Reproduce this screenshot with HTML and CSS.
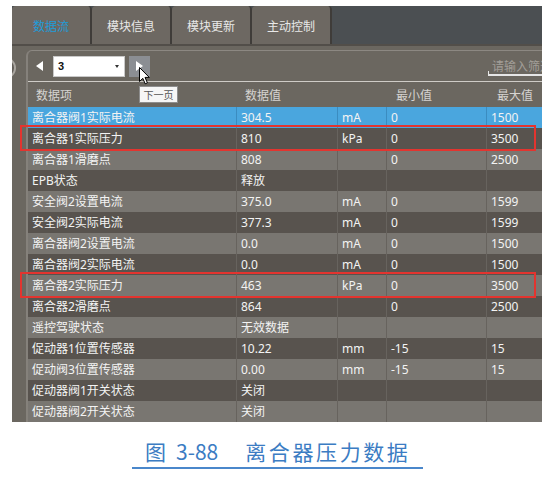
FILE: index.html
```html
<!DOCTYPE html>
<html lang="zh-CN">
<head>
<meta charset="utf-8">
<title>离合器压力数据</title>
<link rel="stylesheet" href="styles.css">
</head>
<body>
<div class="shot">
  <div class="tabs">
    <div class="tab active">数据流</div>
    <div class="tab">模块信息</div>
    <div class="tab">模块更新</div>
    <div class="tab">主动控制</div>
  </div>
  <div class="main">
    <div class="strip"><span class="knob"></span></div>
    <div class="panel">
      <div class="toolbar">
        <span class="prev"></span>
        <div class="select"><span class="sel-val">3</span><span class="caret"></span></div>
        <div class="next">
          <span class="tri"></span>
          <svg class="cursor" width="11" height="18" viewBox="0 0 11 18"><path d="M0.5 0.5 L0.5 14.5 L3.8 11.3 L6.2 16.8 L8.4 15.8 L6 10.4 L10.3 10.4 Z" fill="#ffffff" stroke="#000000" stroke-width="1"/></svg>
          <div class="tip">下一页</div>
        </div>
        <div class="search">请输入筛选</div>
      </div>
      <div class="table">
        <div class="row head"><span>数据项</span><span>数据值</span><span></span><span>最小值</span><span>最大值</span></div>
        <div class="row sel"><span>离合器阀1实际电流</span><span>304.5</span><span>mA</span><span>0</span><span>1500</span></div>
        <div class="row dark mark"><span>离合器1实际压力</span><span>810</span><span>kPa</span><span>0</span><span>3500</span></div>
        <div class="row light"><span>离合器1滑磨点</span><span>808</span><span></span><span>0</span><span>2500</span></div>
        <div class="row dark"><span>EPB状态</span><span>释放</span><span></span><span></span><span></span></div>
        <div class="row light"><span>安全阀2设置电流</span><span>375.0</span><span>mA</span><span>0</span><span>1599</span></div>
        <div class="row dark"><span>安全阀2实际电流</span><span>377.3</span><span>mA</span><span>0</span><span>1599</span></div>
        <div class="row light"><span>离合器阀2设置电流</span><span>0.0</span><span>mA</span><span>0</span><span>1500</span></div>
        <div class="row dark"><span>离合器阀2实际电流</span><span>0.0</span><span>mA</span><span>0</span><span>1500</span></div>
        <div class="row light mark"><span>离合器2实际压力</span><span>463</span><span>kPa</span><span>0</span><span>3500</span></div>
        <div class="row dark"><span>离合器2滑磨点</span><span>864</span><span></span><span>0</span><span>2500</span></div>
        <div class="row light"><span>遥控驾驶状态</span><span>无效数据</span><span></span><span></span><span></span></div>
        <div class="row dark"><span>促动器1位置传感器</span><span>10.22</span><span>mm</span><span>-15</span><span>15</span></div>
        <div class="row light"><span>促动阀3位置传感器</span><span>0.00</span><span>mm</span><span>-15</span><span>15</span></div>
        <div class="row dark"><span>促动器阀1开关状态</span><span>关闭</span><span></span><span></span><span></span></div>
        <div class="row light"><span>促动器阀2开关状态</span><span>关闭</span><span></span><span></span><span></span></div>
      </div>
    </div>
  </div>
</div>
<div class="caption"><span class="c1">图</span><span class="c2">3-88</span><span class="c3">离合器压力数据</span></div>
</body>
</html>
```

FILE: styles.css
```css
html, body {
  margin: 0;
  padding: 0;
  background: #ffffff;
}
body {
  width: 555px;
  height: 481px;
  overflow: hidden;
  font-family: "Noto Sans", "Noto Sans CJK SC", sans-serif;
  font-size: 12px;
}
.shot {
  margin: 6px 0 0 12px;
  width: 530px;
  height: 416px;
  background: #6b6760;
  overflow: hidden;
}
.tabs {
  display: flex;
  height: 38px;
  background: #4b4f52;
}
.tab {
  width: 78px;
  border-right: 2px solid #3f3c39;
  background: #6d6862;
  border-radius: 4px 4px 0 0;
  color: #e8e8e8;
  font-family: "Noto Sans CJK SC", sans-serif;
  font-size: 12px;
  display: flex;
  align-items: center;
  justify-content: center;
}
.tab.active {
  color: #1f9bd8;
}
.main {
  display: flex;
  height: 376px;
  border-top: 2px solid #524e49;
}
.strip {
  width: 14px;
  flex: none;
  position: relative;
  overflow: hidden;
}
.knob {
  position: absolute;
  left: -18px;
  top: 11px;
  width: 18px;
  height: 18px;
  border: 2px solid #aaa6a0;
  border-radius: 50%;
  background: #615d57;
}
.panel {
  flex: 1;
  margin-top: 4px;
  border-top: 1px solid #8c8882;
  border-left: 2px solid #85817b;
  border-top-left-radius: 6px;
}
.toolbar {
  height: 30px;
  display: flex;
  align-items: center;
  border-bottom: 1px solid #cfccc7;
  position: relative;
}
.prev {
  margin-left: 8px;
  width: 0;
  height: 0;
  border-top: 5px solid transparent;
  border-bottom: 5px solid transparent;
  border-right: 7px solid #ffffff;
}
.select {
  margin-left: 10px;
  width: 72px;
  height: 21px;
  background: #ffffff;
  box-sizing: border-box;
  border: 1px solid #c9c9c9;
  display: flex;
  align-items: center;
  padding: 0 4px;
}
.sel-val {
  font-family: "Liberation Sans", sans-serif;
  font-weight: bold;
  font-size: 11px;
  color: #111111;
  flex: 1;
}
.caret {
  width: 0;
  height: 0;
  border-left: 2.5px solid transparent;
  border-right: 2.5px solid transparent;
  border-top: 3px solid #333333;
  margin-right: 1px;
}
.next {
  margin-left: 4px;
  width: 21px;
  height: 21px;
  background: #8b8e93;
  position: relative;
  display: flex;
  align-items: center;
  justify-content: center;
}
.tri {
  width: 0;
  height: 0;
  border-top: 5.5px solid transparent;
  border-bottom: 5.5px solid transparent;
  border-left: 7px solid #ffffff;
}
.cursor {
  position: absolute;
  left: 10px;
  top: 11px;
  z-index: 5;
}
.tip {
  position: absolute;
  left: 10px;
  top: 30px;
  width: 39px;
  height: 17px;
  box-sizing: border-box;
  background: #f6f6f6;
  border: 1px solid #8e8e8e;
  color: #555555;
  font-family: "Noto Sans CJK SC", sans-serif;
  font-size: 10px;
  line-height: 15px;
  text-align: center;
  z-index: 4;
}
.search {
  flex: none;
  margin-left: auto;
  margin-right: -20px;
  width: 74px;
  height: 16px;
  margin-top: 4px;
  padding-left: 4px;
  box-sizing: border-box;
  border-bottom: 2px solid #e6e6e6;
  color: #a29e98;
  font-family: "Noto Sans CJK SC", sans-serif;
  font-size: 12px;
  line-height: 12px;
  white-space: nowrap;
  position: relative;
}
.search::before {
  content: "";
  position: absolute;
  left: 0;
  bottom: -2px;
  width: 1px;
  height: 5px;
  background: #e6e6e6;
}
.table {
  display: flex;
  flex-direction: column;
}
.row {
  display: grid;
  grid-template-columns: 208px 101px 49px 100px 56px;
  height: 21px;
  position: relative;
  color: #f3f3f3;
}
.row span {
  padding-left: 4px;
  line-height: 21px;
  white-space: nowrap;
  overflow: hidden;
}
.row span + span {
  border-left: 1px solid #67635e;
}
.row.head {
  height: 25px;
  color: #d6d4d1;
}
.row.head span {
  line-height: 25px;
  border-left: none;
  font-family: "Noto Sans CJK SC", sans-serif;
}
.row.head span:nth-child(1) { padding-left: 8px; }
.row.head span:nth-child(2) { padding-left: 9px; }
.row.head span:nth-child(4) { padding-left: 10px; }
.row.head span:nth-child(5) { padding-left: 11px; }
.row.sel {
  background: #4aa6de;
}
.row.sel span + span {
  border-left-color: #3b8cc0;
}
.row.light {
  background: #797671;
}
.row.dark {
  background: #58534e;
}
.row.mark::after {
  content: "";
  position: absolute;
  left: -8px;
  right: 6px;
  top: -3px;
  bottom: -2px;
  border: 2px solid #e3342f;
  pointer-events: none;
  z-index: 2;
}
.caption {
  margin: 17px 0 0 132px;
  width: 291px;
  height: 25px;
  padding-bottom: 3px;
  border-bottom: 2px solid #4a87cb;
  display: flex;
  align-items: center;
  color: #3b7cc3;
  font-family: "Noto Sans CJK SC", sans-serif;
  font-size: 21px;
  line-height: 25px;
  white-space: nowrap;
}
.c1 { margin-left: 13px; }
.c2 { margin-left: 10px; }
.c3 { margin-left: 27px; letter-spacing: 2.6px; }
```
